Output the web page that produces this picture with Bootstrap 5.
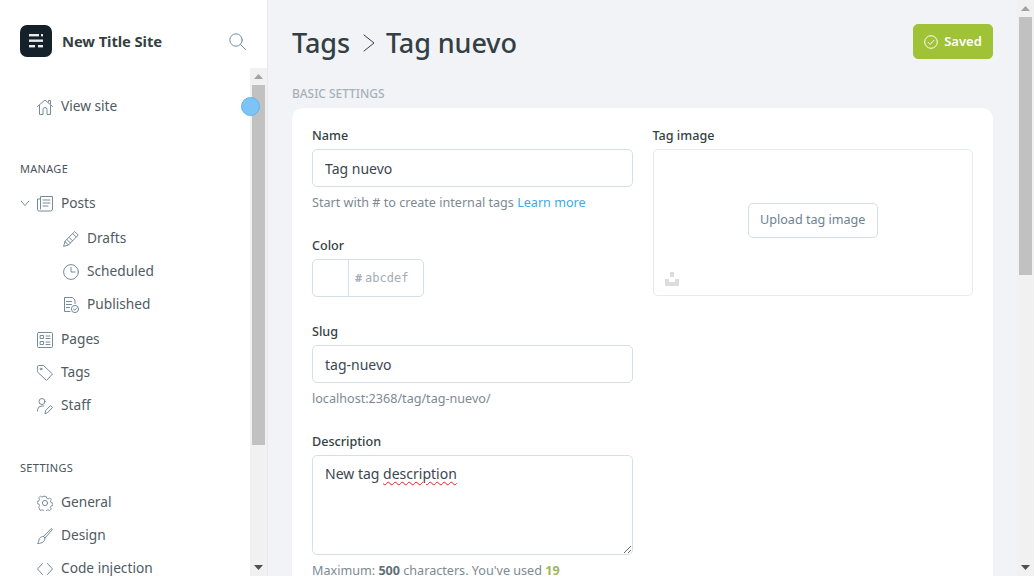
<!DOCTYPE html>
<html lang="en">
<head>
  <meta charset="UTF-8">
  <meta name="viewport" content="width=device-width, initial-scale=1">
  <title>Tag nuevo - New Title Site</title>
  <link href="https://cdn.jsdelivr.net/npm/bootstrap@5.3.0/dist/css/bootstrap.min.css" rel="stylesheet">
  <style>
    html, body { height: 100%; overflow: hidden; }
    body { font-family: "Noto Sans", "Liberation Sans", sans-serif; font-size: 14px; color: #343f44; background: #f2f3f7; }
    .app-shell { height: 576px; }

    /* sidebar */
    .side-wrap { width: 268px; flex: none; background: #fff; border-right: 1px solid #e6e8ec; position: relative; }
    .side-head { height: 68px; padding: 25px 21px 0 20px; }
    .side-brand { height: 32px; }
    .site-logo { width: 32px; height: 32px; border-radius: 7px; background: #15212a; flex: none; }
    .site-name { margin-left: 10px; font-size: 14.8px; font-weight: 700; color: #343f44; letter-spacing: -.1px; }
    .side-body { height: 508px; overflow: hidden; }
    .side-scroll { flex: 1; padding-top: 22px; overflow: hidden; }
    .side-title { margin: 38px 0 10px 20px; font-size: 11px; line-height: 16px; color: #4a545b; letter-spacing: .3px; }
    .side-link { height: 33px; padding: 0 0 0 37px; font-size: 13.7px; color: #4f5b63; text-decoration: none; }
    .side-link svg, .side-chevron { flex: none; }
    .side-link svg.nav-ico { width: 16px; height: 16px; margin-right: 8px; }
    .side-link.is-sub { padding-left: 63px; }
    .side-link.has-toggle { padding-left: 21px; }
    .side-chevron { width: 8px; height: 5px; margin-right: 8px; stroke: #a9b6be; }
    .side-gap { height: 2px; }
    .nav-ico, .line-ico { fill: none; stroke: #748b98; stroke-width: 1; stroke-linecap: round; stroke-linejoin: round; }
    .dot-marker { position: absolute; left: 241px; top: 97px; width: 19px; height: 19px; border-radius: 50%; background: #7cc4f6; border: 1px solid #5db4f0; }

    /* fake scrollbars */
    .scroll-rail { width: 17px; flex: none; background: #f1f1f1; }
    .scroll-btn { height: 17px; flex: none; }
    .scroll-btn svg { width: 9px; height: 5px; fill: #a3a3a3; }
    .scroll-btn.is-dark svg { fill: #505050; }
    .scroll-thumb { margin: 0 2px; background: #c1c1c1; flex: none; }
    .scroll-fill { flex: 1; }

    /* main */
    .main-pane { flex: 1; min-width: 0; padding: 24px 24px 0; overflow: hidden; }
    .page-title { font-size: 27px; line-height: 38px; font-weight: 500; color: #343f44; margin: 0; letter-spacing: -.1px; }
    .page-title svg { width: 12px; height: 18px; margin: 0 11px 0 13px; stroke: #343f44; }
    .btn-saved { width: 80px; height: 35px; padding: 0; background: #9fc237; border: 1px solid #9fc237; border-radius: 5px; color: #fff; font-size: 13px; font-weight: 600; }
    .btn-saved:hover, .btn-saved:focus { background: #9fc237; border-color: #9fc237; color: #fff; }
    .btn-saved svg { width: 14px; height: 14px; margin-right: 6px; fill: none; stroke: #fff; stroke-width: 1; }
    .group-title { margin: 24px 0 6px; font-size: 12px; line-height: 16px; font-weight: 500; color: #a7b1b9; letter-spacing: -.05px; }
    .form-panel { border: 0; border-radius: 10px; padding: 20px 20px 30px; box-shadow: 0 0 1px rgba(0, 0, 0, .06); }
    .form-cols { gap: 20px; }
    .form-cols > div { flex: 1 1 0; min-width: 0; }
    .field-label { display: block; margin-bottom: 6px; font-size: 12.6px; line-height: 15px; font-weight: 500; color: #343f44; }
    .field-input { height: 38px; padding: 0 12px; font-size: 14px; color: #3b4650; border: 1px solid #d3e0e8; border-radius: 5px; box-shadow: none; }
    .field-note { margin: 10px 0 0; font-size: 12.6px; line-height: 12px; color: #7d8a92; }
    .field-note a { color: #3ea8ea; text-decoration: none; }
    .field-block { margin-bottom: 29px; }
    .color-block { margin-bottom: 27px; }
    .color-box { width: 112px; height: 38px; border: 1px solid #d3e0e8; border-radius: 5px; overflow: hidden; }
    .color-swatch { width: 36px; flex: none; border-right: 1px solid #d3e0e8; }
    .color-hash { margin-left: 6px; font-size: 11px; font-weight: 700; color: #a3adb5; }
    .color-value { width: 60px; padding: 0; margin-left: 3px; border: 0; outline: 0; font-family: "DejaVu Sans Mono", monospace; font-size: 12px; }
    .color-value::placeholder { color: #a3adb5; opacity: 1; }
    .desc-box { height: 100px; padding: 7px 12px; line-height: 22px; resize: vertical; overflow: auto; }
    .spell-miss { text-decoration: underline wavy #e02020 1px; text-underline-offset: 2px; }
    .image-drop { height: 147px; border: 1px solid #e4ecf1; border-radius: 5px; position: relative; }
    .btn-upload { height: 35px; width: 130px; padding: 0; font-size: 12.6px; color: #6c8391; background: #fff; border: 1px solid #d3dee5; border-radius: 5px; }
    .upload-mark { position: absolute; left: 11px; bottom: 9px; width: 14px; height: 14px; fill: #dcdcdc; }
    .char-count { font-weight: 700; color: #5f6f78; }
    .char-used { font-weight: 700; color: #9fb85a; }
  </style>
</head>
<body>
  <div class="app-shell d-flex">

    <!-- Sidebar -->
    <aside class="side-wrap d-flex flex-column">
      <div class="side-head">
        <div class="side-brand d-flex align-items-center">
          <div class="site-logo d-flex align-items-center justify-content-center">
            <svg width="14" height="14" viewBox="0 0 14 14" fill="#e8eaec"><rect x="0" y="0" width="10" height="2.400"/><rect x="12" y="0" width="2" height="2.400"/><rect x="0" y="5.500" width="14" height="2.400"/><rect x="0" y="11" width="6" height="2.400"/><rect x="9" y="11" width="5" height="2.400"/></svg>
          </div>
          <div class="site-name flex-grow-1">New Title Site</div>
          <svg class="line-ico" width="17" height="17" viewBox="0 0 17 17"><circle cx="7" cy="7" r="6.200"/><path d="M11.600 11.600 16.500 16.500"/></svg>
        </div>
      </div>
      <div class="side-body d-flex">
        <nav class="side-scroll">
          <a class="side-link d-flex align-items-center" href="#">
            <svg class="nav-ico" viewBox="0 0 16 16"><path d="M.5 7.500 8 1l7.500 6.500M2.500 6.500v9h3.500v-5a2 2 0 0 1 4 0v5h3.500v-9M11.500 3V1.500h2v3.200"/></svg>View site
          </a>
          <div class="side-title">MANAGE</div>
          <a class="side-link has-toggle d-flex align-items-center" href="#">
            <svg class="side-chevron line-ico" viewBox="0 0 8 5"><path d="M.3.3 4 4.500 7.700.3"/></svg>
            <svg class="nav-ico" viewBox="0 0 16 16"><path d="M3.500 13V.5h12v12.500a2 2 0 0 1-2 2H2a1.500 1.500 0 0 1-1.500-1.500V3h3M6 4h7M6 7h7M6 10h5"/></svg>Posts
          </a>
          <div class="side-gap"></div>
          <a class="side-link is-sub d-flex align-items-center" href="#">
            <svg class="nav-ico" viewBox="0 0 16 16"><path d="M12 .8 15.200 4 5.500 14 .6 15.400 2 10.500zM2 10.500 5.500 14M10 2.800 13.200 6M4 8.500l3.300 3.400M6.200 6.500l3.300 3.300"/></svg>Drafts
          </a>
          <a class="side-link is-sub d-flex align-items-center" href="#">
            <svg class="nav-ico" viewBox="0 0 16 16"><circle cx="8" cy="8" r="7.400"/><path d="M8 3.500V8h4"/></svg>Scheduled
          </a>
          <a class="side-link is-sub d-flex align-items-center" href="#">
            <svg class="nav-ico" viewBox="0 0 16 16"><path d="M7 14.500H1.500V.5h8l2.500 2.500v3.500M3.500 4.500h5M3.500 7.500h5M3.500 10.500h3"/><circle cx="12" cy="12" r="3.600"/><path d="m10.400 12 1.200 1.200 2-2.200"/></svg>Published
          </a>
          <div class="side-gap"></div>
          <a class="side-link d-flex align-items-center" href="#">
            <svg class="nav-ico" viewBox="0 0 16 16"><rect x=".5" y=".5" width="15" height="15" rx="1"/><path d="M3.500 3.500h3v3h-3zM3.500 9.500h3v3h-3zM9 4h4M9 6.500h4M9 10h4M9 12.500h4"/></svg>Pages
          </a>
          <a class="side-link d-flex align-items-center" href="#">
            <svg class="nav-ico" viewBox="0 0 16 16"><path d="M.5 1.500a1 1 0 0 1 1-1h5l9 8.500-6 6.500-9-8.500z"/><circle cx="4" cy="4" r=".9"/></svg>Tags
          </a>
          <a class="side-link d-flex align-items-center" href="#">
            <svg class="nav-ico" viewBox="0 0 16 16"><circle cx="5" cy="3.500" r="3"/><path d="M.5 13v-1.500A4.500 4.500 0 0 1 5 8h1.500M8 15.500l.7-3 4.800-5 2 2-4.800 5z"/></svg>Staff
          </a>
          <div class="side-title">SETTINGS</div>
          <a class="side-link d-flex align-items-center" href="#">
            <svg class="nav-ico" viewBox="0 0 16 16"><circle cx="8" cy="8" r="2.600"/><path d="M6.700.6h2.600l.4 2 1.700.8 1.800-1 1.800 1.800-1 1.800.7 1.700 2 .5v2.500l-2 .5-.7 1.700 1 1.800-1.800 1.800-1.800-1-1.700.7-.4 2H6.700l-.4-2-1.700-.7-1.800 1L1 12.700l1-1.800-.7-1.700-2-.5V6.200l2-.5.700-1.700-1-1.800L2.800.400l1.800 1 1.700-.8z" transform="translate(.8 .8) scale(.9)"/></svg>General
          </a>
          <a class="side-link d-flex align-items-center" href="#">
            <svg class="nav-ico" viewBox="0 0 16 16"><path d="M6.500 8.500 14 .8c.6-.5 1.600.4 1.100 1L8 10M6.500 8.500 8 10c0 3-2.500 5.500-7.500 5.500 1.500-1.500 1-3 2-5 .8-1.300 2.500-2.400 4-2z"/></svg>Design
          </a>
          <a class="side-link d-flex align-items-center" href="#">
            <svg class="nav-ico" viewBox="0 0 16 16"><path d="M5.500 2.500.5 8l5 5.500M10.500 2.500l5 5.500-5 5.500"/></svg>Code injection
          </a>
        </nav>
        <div class="scroll-rail d-flex flex-column">
          <div class="scroll-btn d-flex align-items-center justify-content-center"><svg viewBox="0 0 9 5"><path d="M4.500 0 9 5H0z"/></svg></div>
          <div class="scroll-thumb" style="height: 360px"></div>
          <div class="scroll-fill"></div>
          <div class="scroll-btn is-dark d-flex align-items-center justify-content-center"><svg viewBox="0 0 9 5"><path d="M0 0h9L4.500 5z"/></svg></div>
        </div>
      </div>
      <span class="dot-marker"></span>
    </aside>

    <!-- Main -->
    <main class="main-pane">
      <div class="d-flex justify-content-between align-items-start">
        <h1 class="page-title d-flex align-items-center">Tags
          <svg class="line-ico" viewBox="0 0 12 18"><path d="M1 1l10 8-10 8"/></svg>
          Tag nuevo</h1>
        <button type="button" class="btn btn-saved d-flex align-items-center justify-content-center">
          <svg viewBox="0 0 14 14"><circle cx="7" cy="7" r="6.300"/><path d="m4 7.200 2.200 2.200 4-4.400"/></svg>Saved
        </button>
      </div>

      <div class="group-title">BASIC SETTINGS</div>

      <div class="card form-panel">
        <div class="form-cols d-flex">
          <div>
            <div class="field-block">
              <label class="field-label" for="tagName">Name</label>
              <input id="tagName" class="form-control field-input" type="text" value="Tag nuevo">
              <p class="field-note">Start with # to create internal tags <a href="#">Learn more</a></p>
            </div>
            <div class="color-block">
              <label class="field-label">Color</label>
              <div class="color-box d-flex align-items-center">
                <div class="color-swatch align-self-stretch"></div>
                <span class="color-hash">#</span>
                <input class="color-value" type="text" placeholder="abcdef">
              </div>
            </div>
            <div class="field-block">
              <label class="field-label" for="tagSlug">Slug</label>
              <input id="tagSlug" class="form-control field-input" type="text" value="tag-nuevo">
              <p class="field-note">localhost:2368/tag/tag-nuevo/</p>
            </div>
            <div>
              <label class="field-label">Description</label>
              <div class="form-control field-input desc-box">New tag <span class="spell-miss">description</span></div>
              <p class="field-note">Maximum: <span class="char-count">500</span> characters. You've used <span class="char-used">19</span></p>
            </div>
          </div>
          <div>
            <label class="field-label">Tag image</label>
            <div class="image-drop d-flex align-items-center justify-content-center">
              <button type="button" class="btn btn-upload mb-1">Upload tag image</button>
              <svg class="upload-mark" viewBox="0 0 14 14"><path d="M5 0h4v5H5zM0 7h4v3h6V7h4v7H0z"/></svg>
            </div>
          </div>
        </div>
      </div>
    </main>

    <!-- page scrollbar -->
    <div class="scroll-rail d-flex flex-column">
      <div class="scroll-btn d-flex align-items-center justify-content-center"><svg viewBox="0 0 9 5"><path d="M4.500 0 9 5H0z"/></svg></div>
      <div class="scroll-thumb" style="height: 258px"></div>
      <div class="scroll-fill"></div>
      <div class="scroll-btn is-dark d-flex align-items-center justify-content-center"><svg viewBox="0 0 9 5"><path d="M0 0h9L4.500 5z"/></svg></div>
    </div>
  </div>

  <script src="https://cdn.jsdelivr.net/npm/bootstrap@5.3.0/dist/js/bootstrap.bundle.min.js"></script>
</body>
</html>
